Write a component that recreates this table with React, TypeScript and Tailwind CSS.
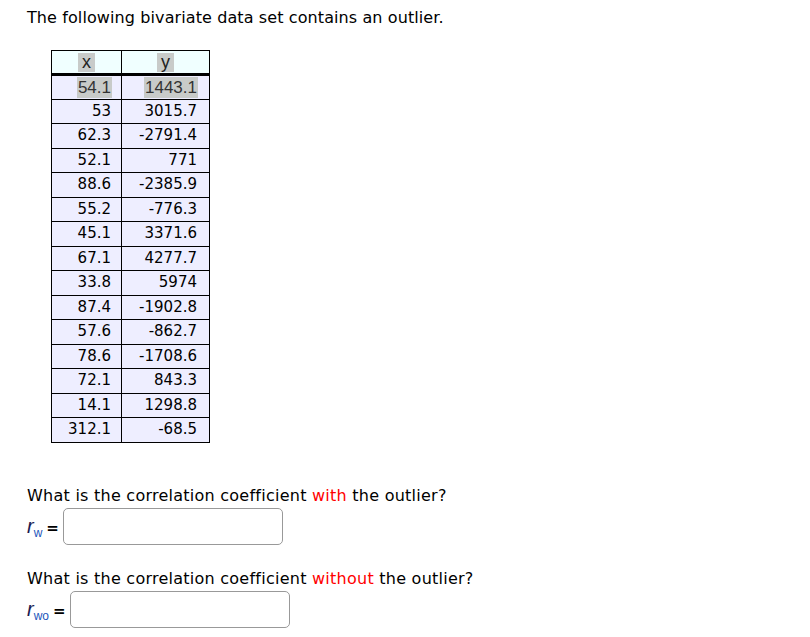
import React from "react";

const rows: [string, string][] = [
  ["53", "3015.7"],
  ["62.3", "-2791.4"],
  ["52.1", "771"],
  ["88.6", "-2385.9"],
  ["55.2", "-776.3"],
  ["45.1", "3371.6"],
  ["67.1", "4277.7"],
  ["33.8", "5974"],
  ["87.4", "-1902.8"],
  ["57.6", "-862.7"],
  ["78.6", "-1708.6"],
  ["72.1", "843.3"],
  ["14.1", "1298.8"],
  ["312.1", "-68.5"],
];

function Label({ sub }: { sub: string }) {
  return (
    <span className="flex items-baseline">
      <span
        className="italic text-[#1a1a50] text-[20px] leading-none"
        style={{ fontFamily: '"Liberation Sans", sans-serif' }}
      >
        r
      </span>
      <span
        className="text-[#2255bb] text-[12px] relative top-[4px] leading-none"
        style={{ fontFamily: '"Liberation Sans", sans-serif' }}
      >
        {sub}
      </span>
      <span className="ml-[4px] font-bold text-[15px] leading-none">=</span>
    </span>
  );
}

export default function App() {
  return (
    <div
      className="w-[810px] h-[637px] bg-white text-black text-[16px] overflow-hidden"
      style={{ fontFamily: '"DejaVu Sans", sans-serif' }}
    >
      <div className="pl-[27px] pt-[8px] leading-[20px] tracking-[0.1px]">
        The following bivariate data set contains an outlier.
      </div>
      <div className="pl-[51px] pt-[22px] text-[15px]">
        <table className="border-collapse">
          <thead>
            <tr className="bg-[#f0ffff] h-[24px]">
              <th className="w-[70px] border border-black border-b-[3px] p-0 text-center font-normal leading-none">
                <span
                  className="inline-block bg-[#c8cbc9] text-[#222] px-[4px] h-[19px] leading-[19px] align-middle"
                  style={{ fontFamily: '"Liberation Sans", sans-serif', fontSize: 18 }}
                >
                  x
                </span>
              </th>
              <th className="w-[88px] border border-black border-b-[3px] p-0 text-center font-normal leading-none">
                <span
                  className="inline-block bg-[#c8cbc9] text-[#222] px-[4px] h-[19px] leading-[19px] align-middle"
                  style={{ fontFamily: '"Liberation Sans", sans-serif', fontSize: 18 }}
                >
                  y
                </span>
              </th>
            </tr>
          </thead>
          <tbody>
            <tr className="bg-[#eeeeff] h-[24.5px]">
              <td className="border border-black p-0 pr-[9px] text-right leading-none">
                <span
                  className="inline-block bg-[#c8cbc9] text-[#333] h-[21px] leading-[21px] align-middle px-[1px]"
                  style={{ fontFamily: '"Liberation Sans", sans-serif', fontSize: 17 }}
                >
                  54.1
                </span>
              </td>
              <td className="border border-black p-0 pr-[11px] text-right leading-none">
                <span
                  className="inline-block bg-[#c8cbc9] text-[#333] h-[21px] leading-[21px] align-middle px-[1px]"
                  style={{ fontFamily: '"Liberation Sans", sans-serif', fontSize: 17 }}
                >
                  1443.1
                </span>
              </td>
            </tr>
            {rows.map(([x, y], i) => (
              <tr key={i} className="bg-[#eeeeff] h-[24.5px]">
                <td className="border border-black p-0 pr-[10px] text-right leading-none">{x}</td>
                <td className="border border-black p-0 pr-[12px] text-right leading-none">{y}</td>
              </tr>
            ))}
          </tbody>
        </table>
      </div>

      <div className="pl-[27px] pt-[43px] leading-[20px] tracking-[0.25px]">
        What is the correlation coefficient <span className="text-[#ff0000]">with</span> the outlier?
      </div>
      <div className="pl-[27px] pt-[2px] flex items-center gap-[4px]">
        <Label sub="w" />
        <input
          className="w-[220px] h-[37px] border border-[#999] rounded-[5px] bg-white outline-none"
          type="text"
        />
      </div>

      <div className="pl-[27px] pt-[24px] leading-[20px] tracking-[0.25px]">
        What is the correlation coefficient <span className="text-[#ff0000]">without</span> the outlier?
      </div>
      <div className="pl-[27px] pt-[2px] flex items-center gap-[4px]">
        <Label sub="wo" />
        <input
          className="w-[220px] h-[37px] border border-[#999] rounded-[5px] bg-white outline-none"
          type="text"
        />
      </div>
    </div>
  );
}
